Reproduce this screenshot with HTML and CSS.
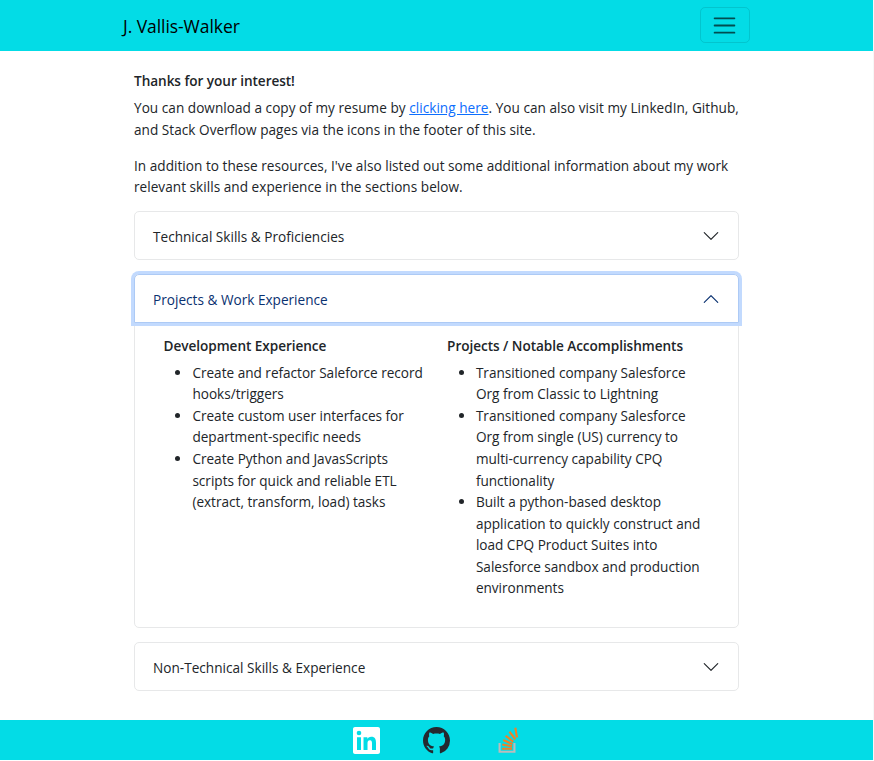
FILE: index.html
```html
<!DOCTYPE html>
<html lang="en">
<head>
<meta charset="utf-8">
<title>J. Vallis-Walker</title>
<link rel="stylesheet" href="styles.css">
</head>
<body>
<div class="page">
  <header class="navbar">
    <a class="brand">J. Vallis-Walker</a>
    <button class="toggler" aria-label="Toggle navigation">
      <svg viewBox="0 0 30 30" width="27" height="27"><path d="M4 7h22M4 15h22M4 23h22" fill="none" stroke="#000" stroke-opacity=".65" stroke-width="2" stroke-linecap="round"/></svg>
    </button>
  </header>
  <main class="content">
    <h5 class="title">Thanks for your interest!</h5>
    <p class="text">You can download a copy of my resume by <a class="link" href="#">clicking here</a>. You can also visit my LinkedIn, Github,<br>and Stack Overflow pages via the icons in the footer of this site.</p>
    <p class="text">In addition to these resources, I've also listed out some additional information about my work<br>relevant skills and experience in the sections below.</p>
    <section class="item">
      <div class="item-button"><span>Technical Skills &amp; Proficiencies</span>
        <svg class="chevron" viewBox="0 0 16 16"><path d="M1.646 4.646a.5.5 0 0 1 .708 0L8 10.293l5.646-5.647a.5.5 0 0 1 .708.708l-6 6a.5.5 0 0 1-.708 0l-6-6a.5.5 0 0 1 0-.708z"/></svg>
      </div>
    </section>
    <section class="item item-open">
      <div class="item-button active"><span>Projects &amp; Work Experience</span>
        <svg class="chevron up" viewBox="0 0 16 16"><path d="M1.646 4.646a.5.5 0 0 1 .708 0L8 10.293l5.646-5.647a.5.5 0 0 1 .708.708l-6 6a.5.5 0 0 1-.708 0l-6-6a.5.5 0 0 1 0-.708z"/></svg>
      </div>
      <div class="columns">
        <div>
          <h6 class="subtitle">Development Experience</h6>
          <ul class="list">
            <li>Create and refactor Saleforce record<br>hooks/triggers</li>
            <li>Create custom user interfaces for<br>department-specific needs</li>
            <li>Create Python and JavasScripts<br>scripts for quick and reliable ETL<br>(extract, transform, load) tasks</li>
          </ul>
        </div>
        <div>
          <h6 class="subtitle">Projects / Notable Accomplishments</h6>
          <ul class="list">
            <li>Transitioned company Salesforce<br>Org from Classic to Lightning</li>
            <li>Transitioned company Salesforce<br>Org from single (US) currency to<br>multi-currency capability CPQ<br>functionality</li>
            <li>Built a python-based desktop<br>application to quickly construct and<br>load CPQ Product Suites into<br>Salesforce sandbox and production<br>environments</li>
          </ul>
        </div>
      </div>
    </section>
    <section class="item">
      <div class="item-button"><span>Non-Technical Skills &amp; Experience</span>
        <svg class="chevron" viewBox="0 0 16 16"><path d="M1.646 4.646a.5.5 0 0 1 .708 0L8 10.293l5.646-5.647a.5.5 0 0 1 .708.708l-6 6a.5.5 0 0 1-.708 0l-6-6a.5.5 0 0 1 0-.708z"/></svg>
      </div>
    </section>
  </main>
  <footer class="footer">
    <svg class="linkedin" viewBox="0 0 24 24" width="27" height="27"><path fill="#fff" d="M20.447 20.452h-3.554v-5.569c0-1.328-.027-3.037-1.852-3.037-1.853 0-2.136 1.445-2.136 2.939v5.667H9.351V9h3.414v1.561h.046c.477-.9 1.637-1.85 3.37-1.85 3.601 0 4.267 2.37 4.267 5.455v6.286zM5.337 7.433a2.062 2.062 0 0 1-2.063-2.065 2.064 2.064 0 1 1 2.063 2.065zm1.782 13.019H3.555V9h3.564v11.452zM22.225 0H1.771C.792 0 0 .774 0 1.729v20.542C0 23.227.792 24 1.771 24h20.451C23.2 24 24 23.227 24 22.271V1.729C24 .774 23.2 0 22.222 0h.003z"/></svg>
    <svg class="github" viewBox="0 0 16 16" width="27" height="27"><path fill="#24292f" d="M8 0C3.58 0 0 3.58 0 8c0 3.54 2.29 6.53 5.47 7.59.4.07.55-.17.55-.38 0-.19-.01-.82-.01-1.49-2.01.37-2.53-.49-2.69-.94-.09-.23-.48-.94-.82-1.13-.28-.15-.68-.52-.01-.53.63-.01 1.08.58 1.23.82.72 1.21 1.87.87 2.33.66.07-.52.28-.87.51-1.07-1.78-.2-3.64-.89-3.64-3.95 0-.87.31-1.59.82-2.15-.08-.2-.36-1.02.08-2.12 0 0 .67-.21 2.2.82.64-.18 1.32-.27 2-.27s1.36.09 2 .27c1.53-1.04 2.2-.82 2.2-.82.44 1.1.16 1.92.08 2.12.51.56.82 1.27.82 2.15 0 3.07-1.87 3.75-3.65 3.95.29.25.54.73.54 1.48 0 1.07-.01 1.93-.01 2.2 0 .21.15.46.55.38A8.01 8.01 0 0 0 16 8c0-4.42-3.58-8-8-8z"/></svg>
    <svg class="stack" viewBox="0 0 24 28" width="23" height="27"><path d="M2.7 16.5v9.3h15.5v-9.3" fill="none" stroke="#bcbbbb" stroke-width="2.2"/><path d="M5.2 22.6h10.5M5.4 18.2l10.3 1.9M6.5 13.5l9.6 4.2M9 9l8 6.3M13 4.7l6.1 8M19.1.7l1.8 10" fill="none" stroke="#f48024" stroke-width="2.2"/></svg>
  </footer>
</div>
</body>
</html>
```

FILE: styles.css
```css
* { box-sizing: border-box; }
body { margin: 0; background: #fff; color: #212529; font: 13.6px/21.6px "Open Sans", "Noto Sans", sans-serif; letter-spacing: .03px; }
.page { width: 873px; height: 760px; display: flex; flex-direction: column; box-shadow: 1px 0 #f7f7f7; }
.navbar { height: 51px; background: #03dce6; padding: 0 123px; display: flex; justify-content: space-between; align-items: center; }
.brand { color: #000; font-size: 17.5px; letter-spacing: -.06px; padding-top: 3px; }
.toggler { width: 50px; height: 36px; margin-top: -1px; padding: 0 1px 0 0; border: 1px solid rgba(0,0,0,.1); border-radius: 5px; background: none; display: flex; align-items: center; justify-content: center; }
.content { width: 605px; margin: 21px 0 0 134px; flex: 1; }
.title, .subtitle { font-size: 13.6px; line-height: 17.3px; font-weight: 600; letter-spacing: -.05px; }
.title { margin: 0 0 8px; }
.subtitle { margin: 0 0 7.6px; }
.text { margin: 0 0 14.4px; white-space: nowrap; }
.text + .item { margin-top: -1.8px; }
.link { color: #0d6efd; }
.item { height: 49px; margin-bottom: 14px; border: 1px solid #e7e8e9; border-radius: 5px; }
.item-open { height: 355px; margin-top: -1px; }
.item-button { height: 47px; padding: 3px 18px 0; display: flex; align-items: center; justify-content: space-between; letter-spacing: .01px; }
.active { height: 49px; margin: 0 -1px; color: #0a3170; border: 1px solid #adcaf5; border-radius: 5px 5px 0 0; box-shadow: 0 0 0 3px #c2dafe; }
.chevron { width: 18px; height: 18px; fill: #212529; margin-top: -2px; }
.up { fill: #0a3170; transform: rotate(180deg); }
.columns { display: grid; grid-template-columns: 283.5px 283.5px; padding: 14px 0 0 28.6px; white-space: nowrap; letter-spacing: -.01px; }
.list { margin: 0; padding-left: 28.8px; }
.footer { height: 40px; background: #03dce6; display: flex; align-items: center; padding: 1px 0 0 352.6px; }
.github { margin-left: 43px; }
.stack { margin-left: 47px; }
```
